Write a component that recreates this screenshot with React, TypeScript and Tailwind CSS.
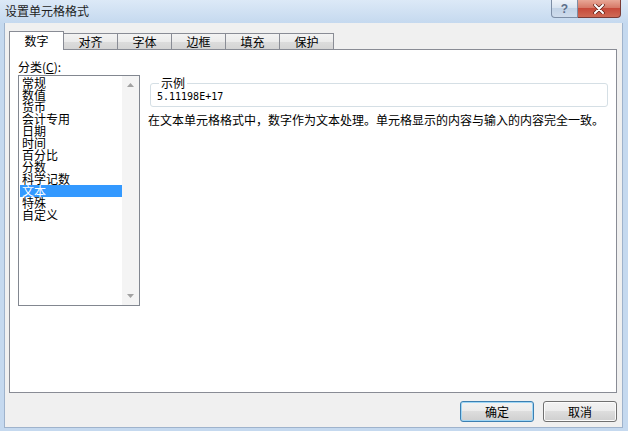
const categories = [
  "常规",
  "数值",
  "货币",
  "会计专用",
  "日期",
  "时间",
  "百分比",
  "分数",
  "科学记数",
  "文本",
  "特殊",
  "自定义",
];

const tabs = ["对齐", "字体", "边框", "填充", "保护"];

function CaptionButtons() {
  return (
    <div className="flex mr-[7px]">
      <div className="w-[27px] h-[18px] flex items-center justify-center rounded-bl-[4px] border border-t-0 border-[#7d8ea5] bg-[linear-gradient(to_bottom,#eef3f9_0%,#d6e2ef_50%,#c2d3e6_50%,#cfdcec_100%)] text-[12px] leading-none font-bold text-[#5c6f8a] font-['Liberation_Sans',sans-serif]">
        ?
      </div>
      <div className="w-[43px] h-[18px] flex items-center justify-center rounded-br-[4px] border border-t-0 border-l-0 border-[#7a3b36] bg-[linear-gradient(to_bottom,#e8a796_0%,#d67a68_45%,#c74a3a_50%,#cf6a55_100%)]">
        <svg width="12" height="10" viewBox="0 0 12 10">
          <path d="M2 1 L10 9 M10 1 L2 9" stroke="#5a1d15" strokeWidth="3.4" strokeLinecap="round" />
          <path d="M2 1 L10 9 M10 1 L2 9" stroke="#ffffff" strokeWidth="2" strokeLinecap="round" />
        </svg>
      </div>
    </div>
  );
}

function ScrollArrow({ down }: { down?: boolean }) {
  return (
    <svg width="7" height="4" viewBox="0 0 7 4">
      <path d={down ? "M0 0 H7 L3.5 4 Z" : "M0 4 H7 L3.5 0 Z"} fill="#a2a2a2" />
    </svg>
  );
}

export default function App() {
  return (
    <div className="w-[628px] h-[431px] flex flex-col bg-[#c5d9ef] font-['Noto_Sans_CJK_SC','Noto_Sans',sans-serif] text-[12px] text-black overflow-hidden">
      {/* title bar */}
      <div className="h-[23px] flex items-start justify-between bg-[linear-gradient(to_bottom,#dce9f7,#c5d9ef)]">
        <span className="pl-[5px] pt-[4px] leading-[14px] text-[#1e1e1e]">设置单元格格式</span>
        <CaptionButtons />
      </div>

      {/* dialog body */}
      <div className="flex-1 ml-[4px] mr-[5px] mb-[3px] bg-[#f0f0f0] border border-t-0 border-[#9fb3cc] flex flex-col pl-[4px] pr-[5px]">
        <div className="h-[27px] flex items-end">
          <div className="relative z-10 w-[55px] h-[19px] bg-white border border-b-0 border-[#898c95] flex items-center justify-center leading-[14px]">
            数字
          </div>
          {tabs.map((t) => (
            <div
              key={t}
              className="w-[54px] h-[17px] border border-l-0 border-[#898c95] bg-[linear-gradient(to_bottom,#f3f3f3_0%,#ebebeb_50%,#dddddd_50%,#d4d4d4_100%)] flex items-center justify-center leading-[14px]"
            >
              {t}
            </div>
          ))}
        </div>

        {/* tab panel */}
        <div className="-mt-px h-[344px] bg-white border border-[#898c95] flex pl-[8px] pr-[8px] pt-[10px]">
          <div className="w-[122px] flex flex-col">
            <div className="h-[15px] leading-[14px]">
              分类(<span className="underline underline-offset-1">C</span>):
            </div>
            <div className="h-[231px] border border-[#828790] bg-white flex">
              <div className="flex-1 pt-[1px] pl-[1px]">
                {categories.map((c) => (
                  <div
                    key={c}
                    className={
                      c === "文本"
                        ? "h-[12px] leading-[12px] pl-[2px] bg-[#3399ff] text-white"
                        : "h-[12px] leading-[12px] pl-[2px]"
                    }
                  >
                    {c}
                  </div>
                ))}
              </div>
              <div className="w-[17px] bg-[#f4f4f4] flex flex-col items-center justify-between pt-[7px] pb-[7px]">
                <ScrollArrow />
                <ScrollArrow down />
              </div>
            </div>
          </div>

          <div className="ml-[8px] flex-1 flex flex-col">
            <fieldset className="mt-[16px] ml-[2px] w-[458px] border border-[#d5dfe5] rounded-[3px] pl-[6px] pb-[2px]">
              <legend className="ml-[2px] px-[2px] leading-[14px]">示例</legend>
              <div className="leading-[14px] text-[10px] font-['DejaVu_Sans_Mono',monospace]">5.11198E+17</div>
            </fieldset>
            <div className="mt-[6px] leading-[14px]">
              在文本单元格格式中，数字作为文本处理。单元格显示的内容与输入的内容完全一致。
            </div>
          </div>
        </div>

        {/* footer buttons */}
        <div className="flex justify-end gap-[9px] pt-[8px]">
          <button className="w-[74px] h-[21px] rounded-[3px] border border-[#3c7fb1] shadow-[inset_0_0_0_1px_#9fd6f5] bg-[linear-gradient(to_bottom,#f2f2f2_0%,#ebebeb_50%,#dddddd_50%,#cfcfcf_100%)] leading-[14px]">
            确定
          </button>
          <button className="w-[74px] h-[21px] rounded-[3px] border border-[#707070] shadow-[inset_0_0_0_1px_#fbfbfb] bg-[linear-gradient(to_bottom,#f2f2f2_0%,#ebebeb_50%,#dddddd_50%,#cfcfcf_100%)] leading-[14px]">
            取消
          </button>
        </div>
      </div>
    </div>
  );
}
